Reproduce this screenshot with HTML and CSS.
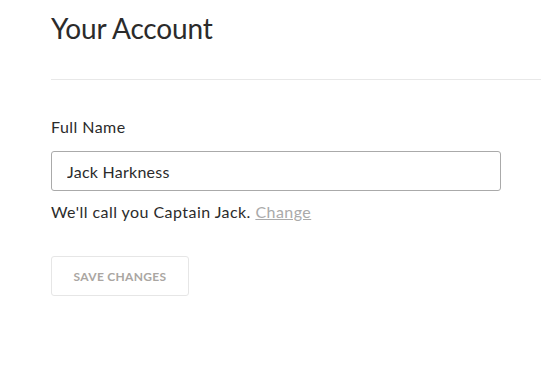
FILE: index.html
```html
<!DOCTYPE html>
<html>
<head>
<meta charset="utf-8">
<link rel="stylesheet" href="styles.css">
</head>
<body>
<div class="page">
  <header class="header">
    <h1 class="title">Your Account</h1>
  </header>
  <form class="form">
    <label class="label" for="name">Full Name</label>
    <input class="input" id="name" type="text" value="Jack Harkness">
    <p class="help">We'll call you Captain Jack. <a class="link" href="#">Change</a></p>
    <button class="btn" type="button">Save Changes</button>
  </form>
</div>
</body>
</html>
```

FILE: styles.css
```css
html, body {
  margin: 0;
  padding: 0;
  background: #fff;
}
body {
  font-family: Lato, "Open Sans", sans-serif;
  color: #2b2b2b;
}
.page {
  padding-left: 51px;
}
.header {
  height: 79px;
  border-bottom: 1px solid #e8e8e8;
  box-sizing: content-box;
}
.title {
  margin: 0;
  padding-top: 10px;
  font-size: 28px;
  line-height: 36px;
  font-weight: 400;
  letter-spacing: -0.15px;
  color: #2b2b2b;
}
.form {
  display: flex;
  flex-direction: column;
  align-items: flex-start;
  padding-top: 35px;
}
.label {
  font-size: 16px;
  line-height: 24px;
  letter-spacing: 0.45px;
}
.input {
  margin-top: 12px;
  width: 450px;
  height: 40px;
  box-sizing: border-box;
  border: 1px solid #aaa;
  border-radius: 3px;
  padding: 0 15px;
  font-family: inherit;
  font-size: 16px;
  letter-spacing: 0.25px;
  color: #2b2b2b;
  outline: none;
}
.help {
  margin: 9px 0 0;
  font-size: 16px;
  line-height: 24px;
  letter-spacing: 0.45px;
}
.link {
  color: #aaa;
  text-decoration: underline;
}
.btn {
  margin-top: 32px;
  width: 138px;
  height: 40px;
  box-sizing: border-box;
  border: 1px solid #e6e6e6;
  border-radius: 3px;
  background: #fff;
  color: #aaa6a2;
  font-family: inherit;
  font-size: 12px;
  font-weight: 700;
  letter-spacing: 0.3px;
  text-transform: uppercase;
  padding: 0;
}
```
